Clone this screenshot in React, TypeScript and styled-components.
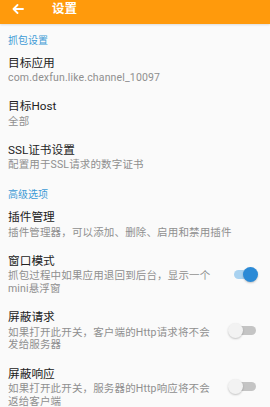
import React from "react";
import styled, { createGlobalStyle } from "styled-components";

const Global = createGlobalStyle`
  html, body { margin: 0; padding: 0; background: #fafafa; }
  body { font-family: Roboto, "Noto Sans CJK SC", sans-serif; }
  * { box-sizing: border-box; }
`;

const Page = styled.div`
  width: 270px;
  height: 407px;
  overflow: hidden;
  background: #fafafa;
`;

const Header = styled.div`
  height: 24px;
  background: #ff9a0c;
  display: flex;
  align-items: center;
  padding: 0 0 7px 12px;
  box-shadow: 0 1px 2px rgba(0, 0, 0, 0.12);
`;

const BackBox = styled.div`
  width: 40px;
  flex: none;
  display: flex;
  align-items: center;
`;

const Title = styled.div`
  color: #fff;
  font-size: 12.5px;
  font-weight: 600;
  line-height: 16px;
`;

const SectionTitle = styled.div`
  color: #3e9bd6;
  font-size: 10px;
  line-height: 13px;
  padding: 9.5px 8px 1px;
`;

const Item = styled.div`
  display: flex;
  align-items: center;
  padding: 8px 12px 8px 8px;
  gap: 8px;
`;

const Texts = styled.div`
  flex: 1;
  display: flex;
  flex-direction: column;
  gap: 1.5px;
`;

const ItemTitle = styled.div`
  color: #222;
  font-size: 11.7px;
  line-height: 15px;
`;

const ItemSub = styled.div`
  color: #8f8f8f;
  font-size: 10.5px;
  line-height: 11.2px;
  letter-spacing: 0.15px;
`;

const Track = styled.div<{ $on: boolean }>`
  position: relative;
  width: 22px;
  height: 9px;
  border-radius: 5px;
  background: ${(p) => (p.$on ? "#a9d2f0" : "#c4c4c4")};
  flex: none;
  margin-right: 2px;
`;

const Thumb = styled.div<{ $on: boolean }>`
  position: absolute;
  top: -3px;
  left: ${(p) => (p.$on ? "9px" : "-6px")};
  width: 15px;
  height: 15px;
  border-radius: 50%;
  background: ${(p) => (p.$on ? "#2b8ad6" : "#f2f2f2")};
  box-shadow: 0 1px 2px rgba(0, 0, 0, 0.22);
`;

const Toggle = ({ on }: { on: boolean }) => (
  <Track $on={on}>
    <Thumb $on={on} />
  </Track>
);

const Back = () => (
  <svg width="12" height="10" viewBox="0 0 12 10">
    <path
      d="M11 5H2M5.5 1L1.5 5l4 4"
      stroke="#fff"
      strokeWidth="1.8"
      fill="none"
      strokeLinecap="round"
      strokeLinejoin="round"
    />
  </svg>
);

type Row = { title: string; sub: string[]; toggle?: boolean };

const rowsA: Row[] = [
  { title: "目标应用", sub: ["com.dexfun.like.channel_10097"] },
  { title: "目标Host", sub: ["全部"] },
  { title: "SSL证书设置", sub: ["配置用于SSL请求的数字证书"] },
];

const rowsB: Row[] = [
  { title: "插件管理", sub: ["插件管理器，可以添加、删除、启用和禁用插件"] },
  { title: "窗口模式", sub: ["抓包过程中如果应用退回到后台，显示一个", "mini悬浮窗"], toggle: true },
  { title: "屏蔽请求", sub: ["如果打开此开关，客户端的Http请求将不会", "发给服务器"], toggle: false },
  { title: "屏蔽响应", sub: ["如果打开此开关，服务器的Http响应将不会", "返给客户端"], toggle: false },
];

const renderRow = (r: Row) => (
  <Item key={r.title}>
    <Texts>
      <ItemTitle>{r.title}</ItemTitle>
      {r.sub.map((s) => (
        <ItemSub key={s}>{s}</ItemSub>
      ))}
    </Texts>
    {r.toggle !== undefined && <Toggle on={r.toggle} />}
  </Item>
);

export default function App() {
  return (
    <Page>
      <Global />
      <Header>
        <BackBox>
          <Back />
        </BackBox>
        <Title>设置</Title>
      </Header>
      <SectionTitle>抓包设置</SectionTitle>
      {rowsA.map(renderRow)}
      <SectionTitle>高级选项</SectionTitle>
      {rowsB.map(renderRow)}
    </Page>
  );
}
